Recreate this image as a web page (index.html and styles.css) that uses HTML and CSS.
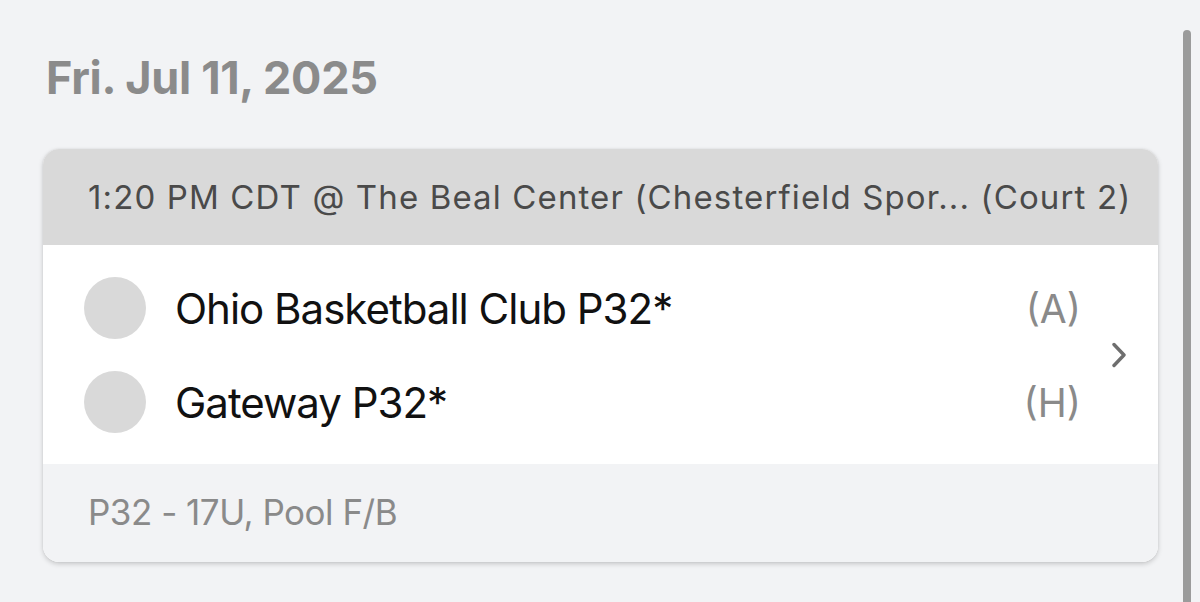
FILE: index.html
```html
<!DOCTYPE html>
<html>
<head>
<meta charset="utf-8">
<link rel="stylesheet" href="styles.css">
</head>
<body>
<div class="page">
  <h1 class="date">Fri. Jul 11, 2025</h1>
  <div class="card">
    <div class="card-head">1:20 PM CDT @ The Beal Center (Chesterfield Spor... (Court 2)</div>
    <div class="card-body">
      <div class="teams">
        <div class="team">
          <span class="avatar"></span>
          <span class="name">Ohio Basketball Club P32*</span>
          <span class="side">(A)</span>
        </div>
        <div class="team">
          <span class="avatar"></span>
          <span class="name">Gateway P32*</span>
          <span class="side">(H)</span>
        </div>
      </div>
      <svg class="chevron" width="14" height="26" viewBox="0 0 14 26"><path d="M2 2.5 L12 13 L2 23.5" fill="none" stroke="#6e6e6e" stroke-width="3.4" stroke-linecap="round" stroke-linejoin="round"/></svg>
    </div>
    <div class="card-foot">P32 - 17U, Pool F/B</div>
  </div>
</div>
<div class="scrollbar"></div>
</body>
</html>
```
FILE: styles.css
```css
html, body {
  margin: 0;
  padding: 0;
  height: 100%;
  overflow: hidden;
}
body {
  background: #f2f3f5;
  font-family: Inter, "Noto Sans", sans-serif;
}
.page {
  padding: 51px 42px 0 43px;
}
.date {
  margin: 0 0 0 3px;
  font-size: 45px;
  line-height: 54px;
  font-weight: 700;
  color: #8b8b8b;
  letter-spacing: -0.3px;
}
.card {
  margin-top: 44px;
  width: 1115px;
  border-radius: 16px;
  overflow: hidden;
  background: #fff;
  box-shadow: 0 2px 5px rgba(0,0,0,0.18), 0 0 2px rgba(0,0,0,0.08);
}
.card-head {
  height: 96px;
  box-sizing: border-box;
  background: #d9d9d9;
  padding-left: 45px;
  display: flex;
  align-items: center;
  font-size: 33px;
  color: #4a4a4a;
  white-space: nowrap;
  letter-spacing: 1.13px;
}
.card-body {
  display: flex;
  align-items: center;
  padding: 32px 32px 31px 41px;
}
.teams {
  flex: 1;
  display: flex;
  flex-direction: column;
  gap: 32px;
  margin-right: 31px;
}
.team {
  display: flex;
  align-items: center;
  height: 62px;
}
.avatar {
  width: 62px;
  height: 62px;
  border-radius: 50%;
  background: #d9d9d9;
  flex: none;
}
.name {
  flex: 1;
  margin-left: 29px;
  font-size: 42px;
  color: #111;
  letter-spacing: -1px;
}
.side {
  font-size: 39px;
  color: #8a8a8a;
}
.chevron {
  display: block;
  flex: none;
}
.card-foot {
  height: 98px;
  box-sizing: border-box;
  background: #f2f3f5;
  padding: 0 0 3px 45px;
  display: flex;
  align-items: center;
  font-size: 35px;
  color: #8a8a8a;
  letter-spacing: -0.5px;
}
.scrollbar {
  position: absolute;
  left: 1183px;
  top: 30px;
  width: 8px;
  bottom: -10px;
  border-radius: 4px;
  background: #9b9b9b;
}
```
